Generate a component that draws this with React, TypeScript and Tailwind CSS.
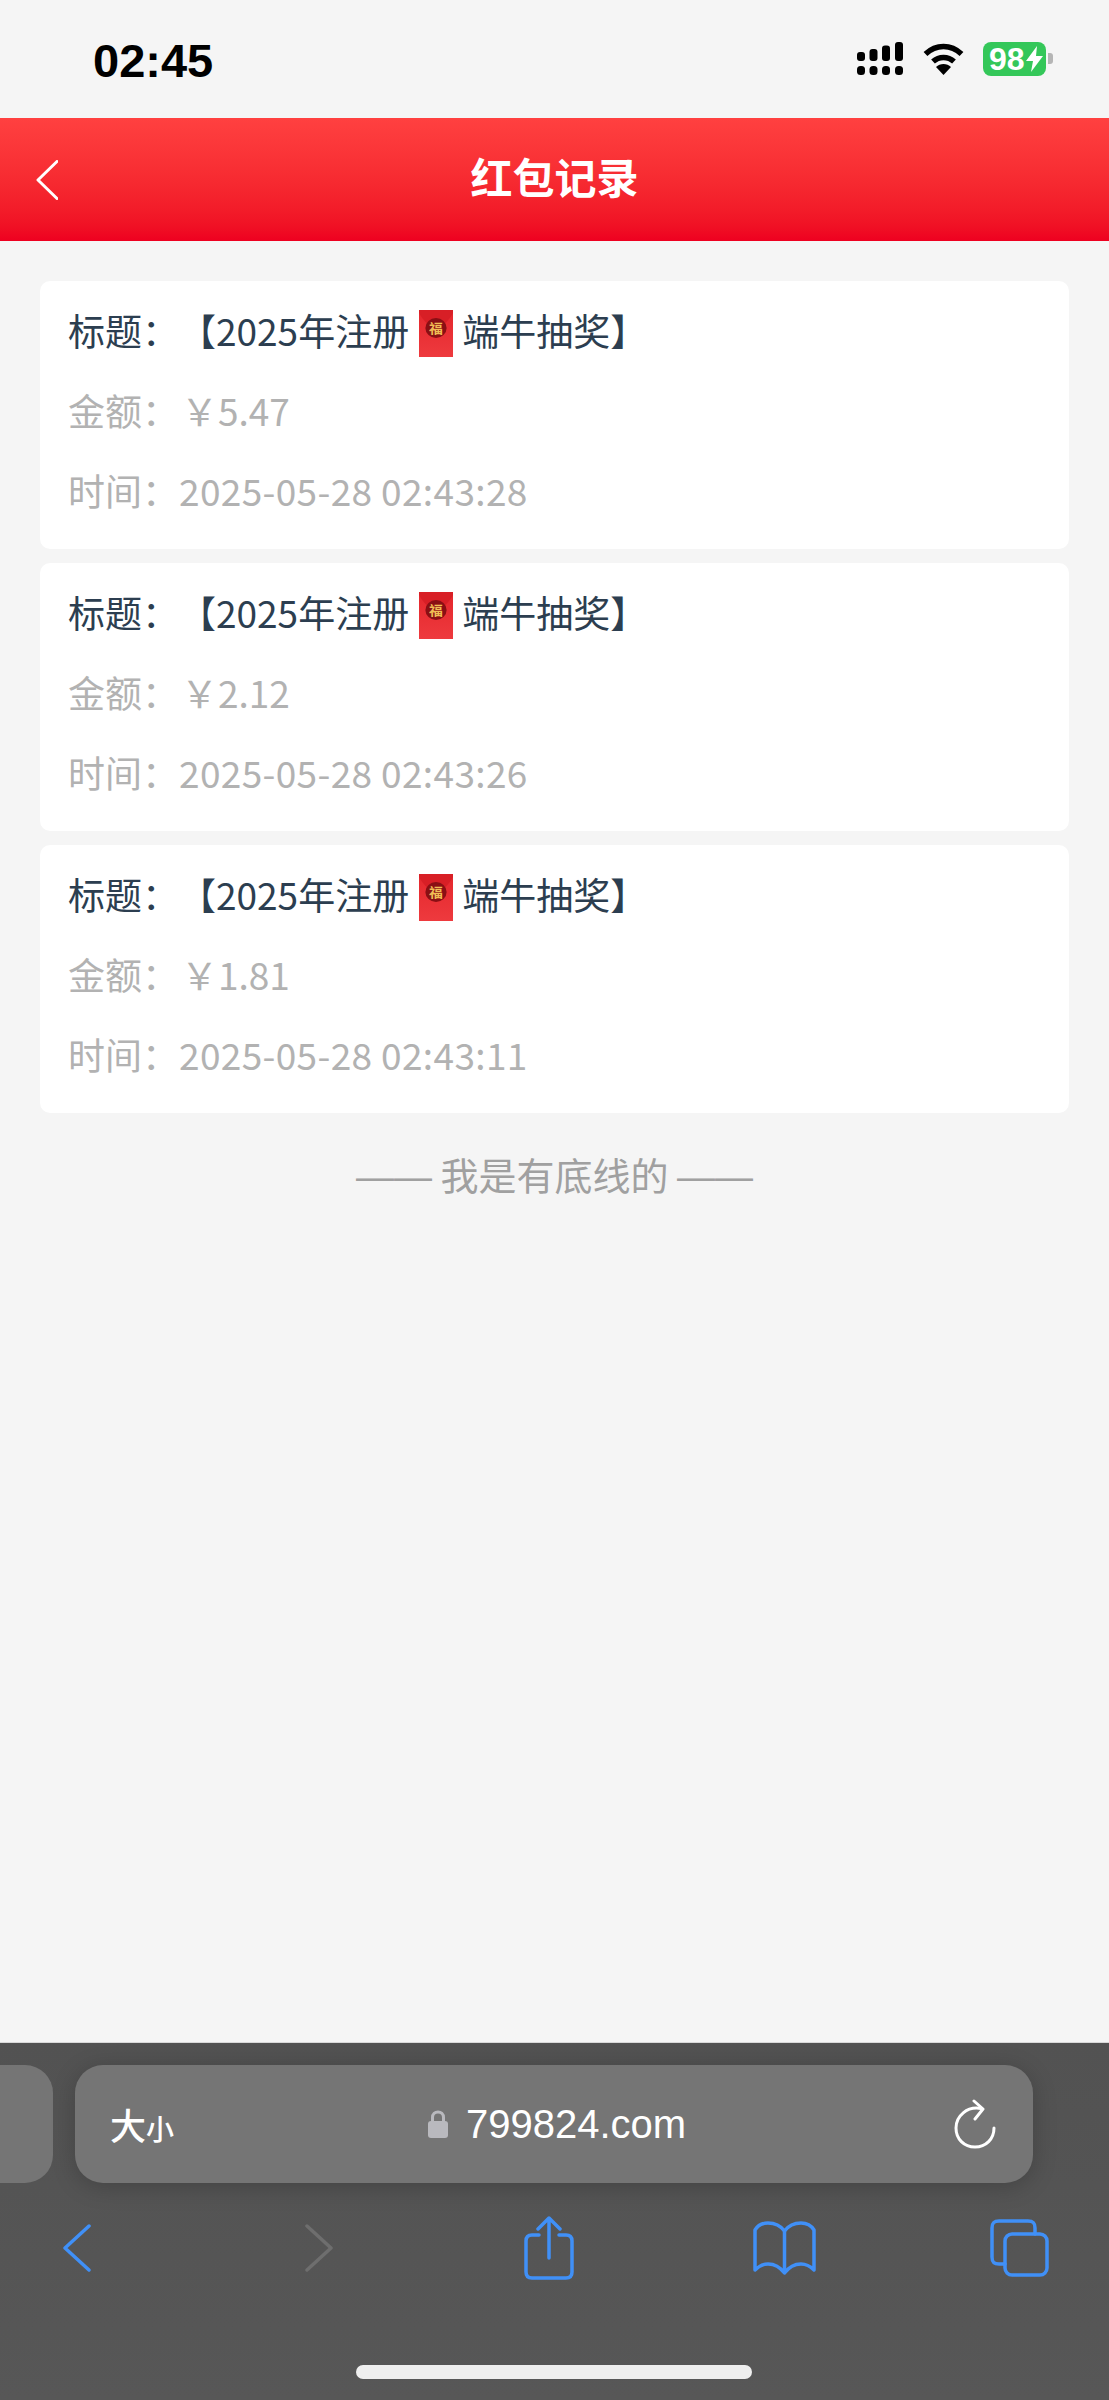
const records = [
  { amount: "5.47", time: "2025-05-28 02:43:28" },
  { amount: "2.12", time: "2025-05-28 02:43:26" },
  { amount: "1.81", time: "2025-05-28 02:43:11" },
];

function RedPacket() {
  return (
    <svg viewBox="0 0 32 47" className="w-[34px] h-[47px] shrink-0 ml-[10px] mr-[9px] mt-[6px]" preserveAspectRatio="none">
      <defs>
        <linearGradient id="packet" x1="0" y1="0" x2="0" y2="1">
          <stop offset="0" stopColor="#e4262c" />
          <stop offset="1" stopColor="#ee3a3e" />
        </linearGradient>
      </defs>
      <rect x="0" y="0" width="32" height="47" fill="url(#packet)" />
      <path d="M0 0H32V3C27 12 22 17 16 17C10 17 5 12 0 3Z" fill="#d81f26" />
      <circle cx="16" cy="18" r="10" fill="#8a0f14" />
      <text x="16" y="23" textAnchor="middle" fontSize="13" fontWeight="700" fill="#f0bd55" fontFamily="'Noto Sans CJK SC', sans-serif">福</text>
    </svg>
  );
}

function RecordCard({ amount, time }: { amount: string; time: string }) {
  return (
    <div className="bg-white rounded-[10px] px-[28px] pt-[9px] pb-[19px]">
      <div className="h-[80px] flex items-center text-[#2c3e50]">
        <span>标题：</span>
        <span>【2025年注册</span>
        <RedPacket />
        <span>端牛抽奖】</span>
      </div>
      <div className="h-[80px] flex items-center text-[#b2b2b2]">
        <span>金额：</span>
        <span className="ml-[2px]">￥{amount}</span>
      </div>
      <div className="h-[80px] flex items-center text-[#b2b2b2]">
        <span>时间：</span>
        <span className="tracking-[0.35px]">{time}</span>
      </div>
    </div>
  );
}

function StatusIcons() {
  return (
    <div className="flex items-center">
      <svg viewBox="0 0 46 34" className="w-[46px] h-[34px]" fill="#000">
        <rect x="0" y="10" width="8" height="9" rx="3" />
        <rect x="12.5" y="7" width="8" height="12" rx="3" />
        <rect x="25" y="3.5" width="8" height="15.5" rx="3" />
        <rect x="38" y="0" width="8" height="19" rx="3" />
        <rect x="0" y="24" width="8" height="9" rx="3.5" />
        <rect x="12.5" y="24" width="8" height="9" rx="3.5" />
        <rect x="25" y="24" width="8" height="9" rx="3.5" />
        <rect x="38" y="24" width="8" height="9" rx="3.5" />
      </svg>
      <svg viewBox="0 0 41 32" className="w-[41px] h-[32px] ml-[20px]">
        <path d="M2.5 11C13 1 28 1 38.5 11" stroke="#000" strokeWidth="5.5" fill="none" />
        <path d="M10 18.5C16 13 25 13 31 18.5" stroke="#000" strokeWidth="5.5" fill="none" />
        <path d="M13 24C17 20 24 20 28 24L20.5 32Z" fill="#000" />
      </svg>
      <div className="w-[63px] h-[34px] ml-[19px] rounded-[8px] bg-[#34c759] flex items-center pl-[6px] text-white font-bold text-[32px] leading-none font-['Liberation_Sans',sans-serif]">
        <span>98</span>
        <svg viewBox="0 0 17 26" className="w-[17px] h-[26px] ml-[1px]" fill="#fff">
          <path d="M11 0L0 15H7L5 26L17 10H10Z" />
        </svg>
      </div>
      <div className="w-[5px] h-[11px] ml-[2px] rounded-r-[3px] bg-[#b5b5b5]" />
    </div>
  );
}

export default function App() {
  return (
    <div className="w-[1109px] h-[2400px] flex flex-col bg-[#f5f5f5] text-[37px] leading-none font-['Noto_Sans_CJK_SC',sans-serif]">
      {/* status bar */}
      <div className="h-[118px] shrink-0 flex items-center justify-between pl-[93px] pr-[56px] pt-[2px]">
        <span className="text-[47px] font-bold text-black font-['Liberation_Sans',sans-serif]">02:45</span>
        <div className="-mt-[3px]">
          <StatusIcons />
        </div>
      </div>

      {/* header */}
      <div className="h-[123px] shrink-0 grid grid-cols-[1fr_auto_1fr] items-center bg-gradient-to-b from-[#ff4040] to-[#ee0020] pl-[36px]">
        <svg viewBox="0 0 22 40" className="w-[22px] h-[40px]" fill="none" stroke="#fff" strokeWidth="3" strokeLinecap="round" strokeLinejoin="round">
          <path d="M21 1.5L2 20L21 38.5" />
        </svg>
        <span className="text-[42px] font-bold text-white -ml-[36px] pb-[7px]">红包记录</span>
        <span />
      </div>

      {/* list */}
      <div className="flex-1 flex flex-col px-[40px] pt-[40px]">
        <div className="flex flex-col gap-[14px]">
          {records.map((r) => (
            <RecordCard key={r.time} amount={r.amount} time={r.time} />
          ))}
        </div>
        <div className="mt-[42px] text-center text-[38px] text-[#a0a0a0]">
          <span className="font-['Liberation_Sans',sans-serif]">——</span> 我是有底线的 <span className="font-['Liberation_Sans',sans-serif]">——</span>
        </div>
      </div>

      {/* safari toolbar */}
      <div className="h-[358px] shrink-0 flex flex-col bg-gradient-to-b from-[#525252] to-[#575757] border-t border-t-[#d8d8d8]">
        <div className="flex gap-[22px] pt-[22px]">
          <div className="w-[53px] h-[118px] rounded-r-[28px] bg-[#757575]" />
          <div className="w-[958px] h-[118px] rounded-[28px] bg-[#757575] shadow-[0_4px_24px_rgba(0,0,0,0.2)] flex items-center justify-between pl-[35px] pr-[37px]">
            <div className="flex items-end w-[72px] text-white font-medium">
              <span className="text-[36px]">大</span>
              <span className="text-[28px]">小</span>
            </div>
            <div className="flex items-center mr-[22px] text-[40px] text-white font-['Liberation_Sans',sans-serif]">
              <svg viewBox="0 0 20 28" className="w-[20px] h-[28px] mr-[18px]">
                <path d="M4.5 12V7.5C4.5 4 7 2 10 2S15.5 4 15.5 7.5V12" stroke="#b9b9be" strokeWidth="3" fill="none" />
                <rect x="0" y="11" width="20" height="17" rx="3" fill="#b9b9be" />
              </svg>
              <span>799824.com</span>
            </div>
            <svg viewBox="0 0 42 50" className="w-[42px] h-[50px]" fill="none" stroke="#fff" strokeWidth="3" strokeLinecap="round" strokeLinejoin="round">
              <path d="M27 9.5C13 7 2 17 2 29C2 40 10 48 21 48C32 48 40 40 40 29" />
              <path d="M20 2L29 10L21 20" />
            </svg>
          </div>
        </div>
        <div className="relative flex-1">
          <div className="flex items-center pl-[63px] pt-[33px]">
            <svg viewBox="0 0 28 48" className="w-[28px] h-[48px]" fill="none" stroke="#4090f7" strokeWidth="3.5" strokeLinecap="round" strokeLinejoin="round">
              <path d="M26 2L2 24L26 46" />
            </svg>
            <svg viewBox="0 0 28 48" className="w-[28px] h-[48px] ml-[214px]" fill="none" stroke="#6e6e6e" strokeWidth="3.5" strokeLinecap="round" strokeLinejoin="round">
              <path d="M2 2L26 24L2 46" />
            </svg>
            <svg viewBox="0 0 50 64" className="w-[50px] h-[64px] ml-[191px]" fill="none" stroke="#4090f7" strokeWidth="3.5" strokeLinecap="round" strokeLinejoin="round">
              <path d="M15 19H8C4 19 2 21 2 25V56C2 60 4 62 8 62H42C46 62 48 60 48 56V25C48 21 46 19 42 19H35" />
              <path d="M25 42V2M14 13L25 2L36 13" />
            </svg>
            <svg viewBox="0 0 63 54" className="w-[63px] h-[54px] ml-[179px]" fill="none" stroke="#4090f7" strokeWidth="3.5" strokeLinecap="round" strokeLinejoin="round">
              <path d="M31.5 10V51" />
              <path d="M31.5 10C27 4 20 2 15 2C9 2 5 4 2 9V49C6 45 10 43 15 43C21 43 27 46 31.5 52C36 46 42 43 48 43C53 43 57 45 61 49V9C58 4 54 2 48 2C43 2 36 4 31.5 10Z" />
            </svg>
            <svg viewBox="0 0 59 58" className="w-[59px] h-[58px] ml-[174px]" fill="none" stroke="#4090f7" strokeWidth="3.5" strokeLinecap="round" strokeLinejoin="round">
              <path d="M45 15V9C45 4 43 2 38 2H9C4 2 2 4 2 9V38C2 43 4 45 9 45H15" />
              <rect x="15" y="15" width="42" height="41" rx="7" />
            </svg>
          </div>
          <div className="absolute left-[356px] bottom-[21px] w-[396px] h-[14px] rounded-full bg-[#efefef]" />
        </div>
      </div>
    </div>
  );
}
